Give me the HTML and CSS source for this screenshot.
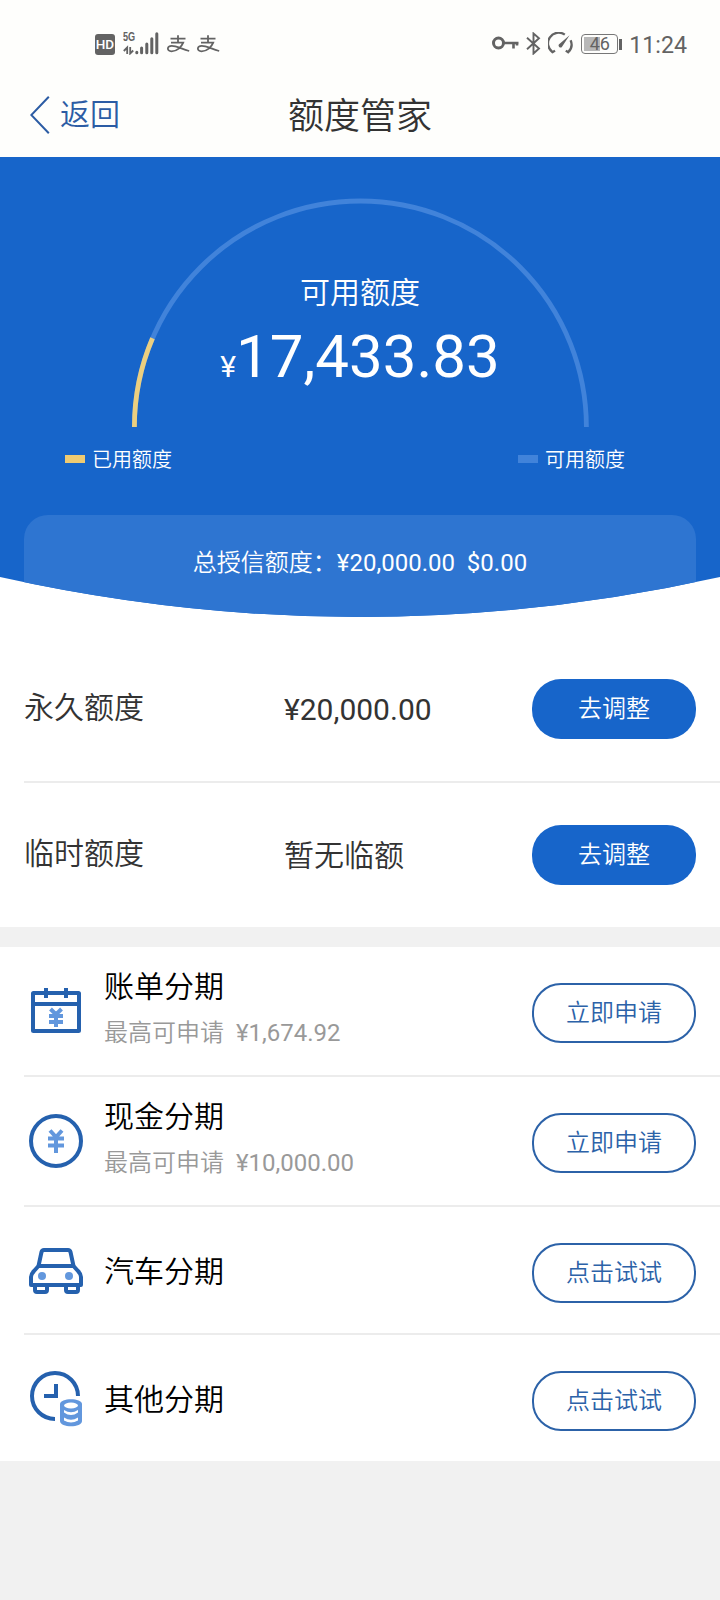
FILE: index.html
```html
<!DOCTYPE html>
<html lang="zh-CN">
<head>
<meta charset="utf-8">
<title>额度管家</title>
<link rel="stylesheet" href="styles.css">
</head>
<body>
<div class="status">
  <div class="status-left">
    <span class="hd">HD</span>
    <span class="signal">
      <span class="net">5G</span>
      <svg class="bars" width="36" height="23" viewBox="0 0 36 23">
        <g fill="none" stroke="#636363" stroke-width="1.8"><path d="M4.200 22V15.500L.8 19M7.200 15V21.500L10.200 18.500"/></g>
        <g stroke="#636363" stroke-width="3" stroke-linecap="round"><path d="M13.800 20.200V20.800M18.600 16V20.800M23.800 12V20.800M28.800 6.800V20.800M33.800 1.800V20.800"/></g>
      </svg>
    </span>
    <svg class="pay" width="23" height="18" viewBox="0 0 23 18"><g fill="none" stroke="#636363" stroke-width="1.800"><path d="M3.500 3.600H18.500M11 .2V7.600M4 7.600H16.200C14.500 12 10 16.300 4.500 16.300C-.5 16.300-.2 10.800 4.800 10.800C9.500 10.800 14.500 14 22.200 16"/></g></svg>
    <svg class="pay" width="23" height="18" viewBox="0 0 23 18"><g fill="none" stroke="#636363" stroke-width="1.800"><path d="M3.500 3.600H18.500M11 .2V7.600M4 7.600H16.200C14.500 12 10 16.300 4.500 16.300C-.5 16.300-.2 10.800 4.800 10.800C9.500 10.800 14.500 14 22.200 16"/></g></svg>
  </div>
  <div class="status-right">
    <svg width="27" height="14" viewBox="0 0 27 14"><g fill="none" stroke="#636363"><circle cx="6.500" cy="7" r="5" stroke-width="3"/><path stroke-width="2.600" d="M12 7H26.500M21.500 7V12.500M25 7V9.500"/></g></svg>
    <svg class="bt" width="15" height="23" viewBox="0 0 15 23"><path fill="none" stroke="#636363" stroke-width="1.900" d="M1 5.800L13 16.500L7.500 21.500V1.500L13 6.200L1 17.200"/></svg>
    <svg class="gauge" width="25" height="23" viewBox="0 0 25 23"><path fill="none" stroke="#636363" stroke-width="2.300" d="M16.800 2.600A10.700 10.700 0 0 0 4.600 20.200L7 18.600M22.600 8.200A10.700 10.700 0 0 1 20.200 20.200L17.800 18.600"/><path fill="#636363" d="M21.600 3.200L13.700 15.200A2 2 0 0 1 10.800 12.600Z"/></svg>
    <span class="battery"><span class="level"></span><span class="pct">46</span></span><span class="cap"></span>
    <span class="time">11:24</span>
  </div>
</div>
<header class="nav">
  <a class="back"><svg width="20" height="38" viewBox="0 0 20 38"><path d="M18.800 .8L1.300 19L18.800 37.200" fill="none" stroke="#2c5ca4" stroke-width="2"/></svg><span class="back-text">返回</span></a>
  <h1 class="title">额度管家</h1>
</header>

<div class="hero-wrap">
<section class="hero">
  <div class="gauge-box">
    <svg class="arc" width="458" height="232" viewBox="0 0 458 232">
      <path d="M3.400 230A226 226 0 0 1 455.400 230" fill="none" stroke="#4183da" stroke-width="4.800"/>
      <path d="M3.400 230A226 226 0 0 1 21.500 141.300" fill="none" stroke="#ebcf80" stroke-width="4.800"/>
    </svg>
    <div class="label">可用额度</div>
    <div class="amount"><span class="cur">¥</span>17,433.83</div>
  </div>
  <div class="legend">
    <span class="key"><i class="swatch used"></i>已用额度</span>
    <span class="key"><i class="swatch free"></i>可用额度</span>
  </div>
  <div class="total"><span class="cjk">总授信额度：</span>¥20,000.00&nbsp; $0.00</div>
</section>
</div>

<section class="limits">
  <div class="limit line"><span class="name">永久额度</span><span class="value">¥20,000.00</span><button class="btn solid">去调整</button></div>
  <div class="limit"><span class="name">临时额度</span><span class="value none">暂无临额</span><button class="btn solid">去调整</button></div>
</section>

<section class="plans">
  <div class="plan tall line">
    <svg class="icon" width="56" height="60" viewBox="0 0 56 60">
      <g fill="none" stroke="#2561ae" stroke-width="4"><rect x="5" y="12" width="46" height="38" rx=".5"/><path d="M5 23H51M18 7V17M38 7V17"/></g>
      <path d="M22.500 28L28 33.500L33.500 28M21 35H35M21 41H35M28 33V46" fill="none" stroke="#6297dd" stroke-width="4"/>
    </svg>
    <div class="info"><div class="plan-name">账单分期</div><div class="sub"><span class="cjk">最高可申请</span>&nbsp; ¥1,674.92</div></div>
    <button class="btn ghost">立即申请</button>
  </div>
  <div class="plan tall line">
    <svg class="icon" width="56" height="60" viewBox="0 0 56 60">
      <circle cx="28" cy="30" r="25" fill="none" stroke="#2561ae" stroke-width="4"/>
      <path d="M22 19.500L28 26L34 19.500M20 27.500H36M20 34.500H36M28 25V42" fill="none" stroke="#6297dd" stroke-width="4"/>
    </svg>
    <div class="info"><div class="plan-name">现金分期</div><div class="sub"><span class="cjk">最高可申请</span>&nbsp; ¥10,000.00</div></div>
    <button class="btn ghost">立即申请</button>
  </div>
  <div class="plan line">
    <svg class="icon" width="56" height="60" viewBox="0 0 56 60">
      <g fill="none" stroke="#2561ae" stroke-width="4" stroke-linejoin="round"><path d="M10.500 26L13.500 12Q14 10 16 10H40Q42 10 42.500 12L45.500 26"/><path d="M10.500 26H45.500L50 31Q53 34 53 37V45H3V37Q3 34 6 31Z"/><path d="M7 46V50Q7 52 9 52H17Q19 52 19 50V46M38 46V50Q38 52 40 52H48Q50 52 50 50V46"/></g>
      <circle cx="14" cy="36" r="4" fill="#6297dd"/><circle cx="41" cy="36" r="4" fill="#6297dd"/>
    </svg>
    <div class="info"><div class="plan-name">汽车分期</div></div>
    <button class="btn ghost">点击试试</button>
  </div>
  <div class="plan">
    <svg class="icon" width="56" height="60" viewBox="0 0 56 60">
      <g fill="none" stroke="#2561ae" stroke-width="4"><path d="M50 28A23 23 0 1 0 27 51"/><path d="M28 16V28H16"/></g>
      <path fill="#6297dd" d="M32 36C32 29.500 54 29.500 54 36V53C54 60 32 60 32 53Z"/>
      <g fill="#fff"><ellipse cx="43" cy="37.500" rx="7" ry="2.900"/><path d="M36 42Q43 46.500 50 42V44.500Q43 49.500 36 44.500ZM36 49.500Q43 54 50 49.500V52.500Q43 56.500 36 52.500Z"/></g>
    </svg>
    <div class="info"><div class="plan-name">其他分期</div></div>
    <button class="btn ghost">点击试试</button>
  </div>
</section>
</body>
</html>
```
FILE: styles.css
```css
* { box-sizing: border-box; }
body {
  margin: 0;
  width: 720px;
  height: 1600px;
  overflow: hidden;
  background: #f1f1f1;
  font-family: Roboto, "Noto Sans CJK SC", sans-serif;
  color: #333;
}
svg { display: block; flex: none; }

.status {
  display: flex;
  justify-content: space-between;
  height: 76px;
  padding: 32px 33px 0 95px;
  background: #fefefc;
  color: #636363;
}
.status-left, .status-right { display: flex; height: 23px; }
.hd {
  width: 20px;
  height: 21px;
  margin-top: 2px;
  border-radius: 3px;
  background: #636363;
  color: #fff;
  font-size: 13.500px;
  font-weight: 500;
  line-height: 21px;
  text-align: center;
}
.signal { position: relative; margin-left: 8px; }
.net {
  position: absolute;
  top: -2px;
  left: 0;
  font-family: "Liberation Sans", sans-serif;
  font-size: 13px;
  font-weight: 700;
  line-height: 14px;
  transform: scaleX(.7);
  transform-origin: left;
}
.pay { margin: 3px 0 0 7px; }
.status-left .pay:nth-of-type(1) { margin-left: 8px; }
.status-right > svg:first-child { margin-top: 4px; }
.bt { margin-left: 7px; }
.gauge { margin-left: 7px; }
.battery {
  position: relative;
  width: 37px;
  height: 20px;
  margin: 2px 0 0 8px;
  border: 1.500px solid #777;
  border-radius: 4px;
  font-size: 18px;
  line-height: 18px;
  text-align: center;
}
.level {
  position: absolute;
  top: 2px;
  left: 2px;
  width: 16px;
  height: 14px;
  background: #b8b8b8;
}
.pct { position: relative; }
.cap { width: 3px; height: 11px; margin: 7px 0 0 1px; background: #636363; }
.time { margin-left: 7px; font-size: 23.200px; line-height: 26px; }

.nav {
  display: grid;
  grid-template-columns: 1fr auto 1fr;
  align-items: center;
  height: 81px;
  padding: 0 30px 4px;
  background: #fefefc;
}
.back {
  display: flex;
  align-items: center;
  gap: 10px;
  color: #2c5ca4;
  font-size: 30px;
  line-height: 36px;
}
.back-text { padding-bottom: 5px; }
.title {
  margin: 0;
  padding-top: 5px;
  font-size: 36px;
  font-weight: 350;
  line-height: 44px;
}
.back, .label, .legend, .name, .none, .btn, .plan-name, .cjk {
  font-family: "Noto Sans CJK SC", sans-serif;
  font-weight: 350;
}
.cjk { line-height: 1; }

.hero-wrap { background: #fff; }
.hero {
  height: 460px;
  background: #1765ca;
  color: #fff;
  clip-path: path("M0 0H720V420Q360 500 0 420Z");
}
.gauge-box {
  position: relative;
  height: 270px;
  padding-top: 113px;
  text-align: center;
}
.arc { position: absolute; left: 131px; top: 40px; }
.label { font-size: 30px; line-height: 40px; }
.amount { margin-top: 12px; font-size: 60px; line-height: 70px; }
.cur { font-size: 30px; }
.legend {
  display: flex;
  justify-content: space-between;
  height: 88px;
  padding: 17px 95px 0 65px;
  font-size: 20px;
  line-height: 30px;
}
.key { display: flex; align-items: center; gap: 7px; height: 30px; }
.swatch { width: 20px; height: 8px; }
.used { background: #efcb72; }
.free { background: #4183da; }
.total {
  height: 102px;
  margin: 0 24px;
  padding-top: 30px;
  border-radius: 24px 24px 0 0;
  background: #2e75d1;
  font-size: 24px;
  line-height: 36px;
  text-align: center;
}

.limits { padding-top: 20px; background: #fff; }
.limit {
  display: flex;
  align-items: center;
  height: 144px;
  margin-left: 24px;
  padding-right: 24px;
  font-size: 30px;
}
.line { box-sizing: content-box; border-bottom: 2px solid #ececec; }
.name { width: 260px; padding-bottom: 8px; }
.value { flex: 1; }
.none { padding-bottom: 4px; }
.btn {
  width: 164px;
  height: 60px;
  padding: 0 0 5px;
  border: 0;
  border-radius: 29px;
  font-size: 24px;
}
.solid { background: #1765ca; color: #fff; }
.ghost { border: 2px solid #2c62a8; background: #fff; color: #2c62a8; }

.plans { margin-top: 20px; background: #fff; }
.plan {
  display: flex;
  align-items: center;
  height: 126px;
  padding-right: 24px;
  margin-left: 24px;
}
.plan .ghost { margin-top: 6px; }
.tall .ghost { margin-top: 4px; }
.tall { height: 128px; }
.icon { margin-left: 4px; }
.info { flex: 1; margin-left: 20px; padding-bottom: 2px; }
.tall .info { padding: 0 0 4px; }
.plan-name { color: #000; font-size: 30px; line-height: 44px; }
.sub { padding-top: 4px; color: #999; font-size: 24px; line-height: 46px; }
```
